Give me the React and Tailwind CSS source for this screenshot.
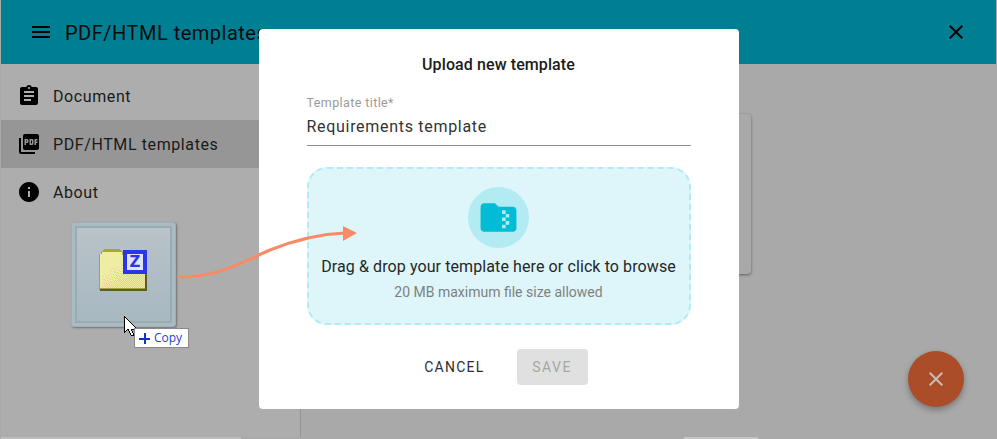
import React from "react"

const roboto = { fontFamily: "Roboto, sans-serif" }

function MaterialIcon({ d, className }) {
  return (
    <svg viewBox="0 0 24 24" className={className} fill="currentColor">
      <path d={d} />
    </svg>
  )
}

const ICONS = {
  menu: "M3 18h18v-2H3v2zm0-5h18v-2H3v2zm0-7v2h18V6H3z",
  close: "M19 6.41L17.59 5 12 10.59 6.41 5 5 6.41 10.59 12 5 17.59 6.41 19 12 13.41 17.59 19 19 17.59 13.41 12z",
  assignment: "M19 3h-4.18C14.4 1.84 13.3 1 12 1c-1.3 0-2.4.84-2.82 2H5c-1.1 0-2 .9-2 2v14c0 1.1.9 2 2 2h14c1.1 0 2-.9 2-2V5c0-1.1-.9-2-2-2zm-7 0c.55 0 1 .45 1 1s-.45 1-1 1-1-.45-1-1 .45-1 1-1zm2 14H7v-2h7v2zm3-4H7v-2h10v2zm0-4H7V7h10v2z",
  pdf: "M20 2H8c-1.1 0-2 .9-2 2v12c0 1.1.9 2 2 2h12c1.1 0 2-.9 2-2V4c0-1.1-.9-2-2-2zm-8.5 7.5c0 .83-.67 1.5-1.5 1.5H9v2H7.5V7H10c.83 0 1.5.67 1.5 1.5v1zm5 2c0 .83-.67 1.5-1.5 1.5h-2.5V7H15c.83 0 1.5.67 1.5 1.5v3zm4-3H19v1h1.5V11H19v2h-1.5V7h3v1.5zM9 9.5h1v-1H9v1zM4 6H2v14c0 1.1.9 2 2 2h14v-2H4V6zm10 5.5h1v-3h-1v3z",
  info: "M12 2C6.48 2 2 6.48 2 12s4.48 10 10 10 10-4.48 10-10S17.52 2 12 2zm1 15h-2v-6h2v6zm0-8h-2V7h2v2z",
  folderZip: "M20 6h-8l-2-2H4c-1.1 0-1.99.9-1.99 2L2 18c0 1.1.9 2 2 2h16c1.1 0 2-.9 2-2V8c0-1.1-.9-2-2-2zm-2 6h-2v2h2v2h-2v2h-2v-2h2v-2h-2v-2h2v-2h-2V8h2v2h2v2z",
}

const navItems = [
  { label: "Document", icon: ICONS.assignment },
  { label: "PDF/HTML templates", icon: ICONS.pdf, active: true },
  { label: "About", icon: ICONS.info },
]

// dithered speckle on the dragged folder icon, denser towards the lower right
const speckle = []
for (let y = 16; y < 39; y++) {
  for (let x = 4; x < 47; x++) {
    const chance = (y - 18) / 22 + (x - 14) / 34
    if ((x + y) % 2 === 0 && (x * 7 + y * 13) % 11 < chance * 11) speckle.push([x, y])
  }
}

function FolderIcon() {
  return (
    <svg width="49" height="42" viewBox="0 0 49 42" shapeRendering="crispEdges">
      <path d="M6 0h15l4 3v3H3V3z" fill="#a5a53a" />
      <path d="M1 5h3V3h20v3h23v35H1z" fill="#efeca3" />
      <rect x="1" y="5" width="1" height="36" fill="#a3a345" />
      <rect x="2" y="39" width="45" height="1" fill="#a3a345" />
      <rect x="2" y="40" width="47" height="2" fill="#5c5c28" />
      <rect x="47" y="22" width="2" height="18" fill="#5c5c28" />
      {speckle.map(([x, y]) => (
        <rect key={`${x}-${y}`} x={x} y={y} width="1" height="1" fill="#f0c8a0" />
      ))}
    </svg>
  )
}

function DragGhost() {
  return (
    <div className="absolute left-[71px] top-[222px] w-[105px] h-[105px]">
      <div className="w-full h-full p-[3px] rounded-[3px] border border-[#9fb0b8] bg-[#a9bcc4] shadow-[1px_1px_2px_rgba(90,90,90,0.7)]">
        <div className="relative w-full h-full border-2 border-[#9aabb3] bg-gradient-to-b from-[#b9c3c8] to-[#a7b8c0]">
          <div className="absolute left-[21px] top-[21px]">
            <FolderIcon />
          </div>
          <div
            className="absolute left-[46px] top-[22px] w-[24px] h-[24px] border-[4px] border-[#2a36ea] bg-[#dfe3f6] flex items-center justify-center text-[#2a36ea] text-[15px] font-black leading-none"
            style={{ fontFamily: "'DejaVu Sans', sans-serif" }}
          >
            Z
          </div>
        </div>
      </div>
      <svg width="16" height="24" viewBox="0 0 16 24" className="absolute left-[52px] top-[93px]" shapeRendering="crispEdges">
        <path d="M1 1v17l4-4 3 6h3l-3-6h6z" fill="#fff" stroke="#000" strokeWidth="1" />
      </svg>
      <div
        className="absolute left-[63px] top-[106px] w-[55px] h-[20px] bg-white border border-[#8a8a8a] flex items-center pl-[4px] gap-[4px] text-[12px] text-[#1f3fd6]"
        style={{ fontFamily: "'Open Sans', sans-serif" }}
      >
        <svg width="11" height="11" viewBox="0 0 11 11" shapeRendering="crispEdges">
          <path d="M4.5 0h2v4.5H11v2H6.5V11h-2V6.5H0v-2h4.5z" fill="#0f35c8" />
        </svg>
        <span>Copy</span>
      </div>
    </div>
  )
}

function DragArrow() {
  return (
    <svg width="200" height="70" viewBox="0 0 200 70" className="absolute left-[170px] top-[220px]" fill="none">
      <path d="M7 57C50 57 70 43 100 30C125 20 150 14 175 13" stroke="#fa8a66" strokeWidth="3" />
      <path d="M173 6L187 13L173 21z" fill="#fa8a66" />
    </svg>
  )
}

function UploadDialog() {
  return (
    <div className="absolute inset-0 pb-[1px] flex items-center justify-center">
      <div className="w-[480px] h-[380px] bg-white rounded-[4px] flex flex-col px-[48px]">
        <h2 className="mt-[26px] text-center text-[16px] leading-[20px] font-medium tracking-[0.1px] text-[#1c1c1c]">Upload new template</h2>
        <label className="mt-[21px] text-[12.5px] leading-[14px] tracking-[0.4px] text-[#9a9a9a]">Template title*</label>
        <div className="mt-[5px] h-[31px] border-b border-[#8c8c8c] text-[16px] leading-[24px] tracking-[0.7px] text-[#333333]">
          Requirements template
        </div>
        <div className="mt-[21px] h-[158px] rounded-[20px] border-2 border-dashed border-[#b2ebf2] bg-[#def6f9] flex flex-col items-center">
          <div className="mt-[18px] w-[61px] h-[61px] rounded-full bg-[#b2ebf2] flex items-center justify-center text-[#00bcd4]">
            <MaterialIcon d={ICONS.folderZip} className="w-[43px] h-[43px]" />
          </div>
          <p className="mt-[7px] text-[16px] leading-[24px] tracking-[0.1px] text-[#262626]">Drag &amp; drop your template here or click to browse</p>
          <p className="mt-[3px] text-[14px] leading-[20px] text-[#808080]">20 MB maximum file size allowed</p>
        </div>
        <div className="mt-[24px] flex justify-end items-center pr-[103px]">
          <button className="mr-[32px] text-[14px] font-normal tracking-[1.25px] text-[#2e2e2e]">CANCEL</button>
          <button className="w-[71px] h-[36px] rounded-[4px] bg-[#e0e0e0] text-[14px] font-normal tracking-[1.5px] text-[#a6a6a6]">SAVE</button>
        </div>
      </div>
    </div>
  )
}

export default function App() {
  return (
    <div className="relative w-[997px] h-[439px] overflow-hidden bg-[#a9a9a9] px-[1px] flex flex-col" style={roboto}>
      <header className="h-[64px] shrink-0 bg-[#007f92] flex items-center pl-[28px] pr-[28px] text-black">
        <MaterialIcon d={ICONS.menu} className="w-[24px] h-[24px]" />
        <h1 className="ml-[12px] pt-[1px] text-[20px] font-normal tracking-[0.5px] text-[#0a0a0a] whitespace-nowrap">PDF/HTML templates</h1>
        <MaterialIcon d={ICONS.close} className="ml-auto w-[24px] h-[24px]" />
      </header>

      <div className="flex-1 flex min-h-0">
        <aside className="w-[300px] shrink-0 bg-[#adadad] border-r border-[#949494] pt-[8px]">
          {navItems.map((item) => (
            <div key={item.label} className={`h-[48px] flex items-center pl-[16px] gap-[12px] ${item.active ? "bg-[#969696]" : ""}`}>
              <MaterialIcon d={item.icon} className="w-[24px] h-[24px] text-black" />
              <span className="pt-[1px] text-[16px] tracking-[0.6px] text-[#1a1a1a]">{item.label}</span>
            </div>
          ))}
        </aside>
        <main className="flex-1 pl-[100px] pt-[50px]">
          <div className="w-[350px] h-[160px] rounded-[4px] bg-[#a9a9a9] shadow-[0_1px_3px_rgba(0,0,0,0.45)]"></div>
        </main>
      </div>

      <div className="h-[2px] shrink-0 flex">
        <div className="w-[240px] bg-[#bdbdbd]"></div>
        <div className="ml-[443px] w-[74px] bg-[#c4c4c4]"></div>
      </div>

      <UploadDialog />
      <DragGhost />
      <DragArrow />

      <button className="absolute left-[908px] top-[351px] w-[56px] h-[56px] rounded-full bg-[#ac4d29] flex items-center justify-center text-[#c8bdb5] shadow-[0_3px_6px_rgba(0,0,0,0.3)]">
        <MaterialIcon d={ICONS.close} className="w-[24px] h-[24px]" />
      </button>
    </div>
  )
}
